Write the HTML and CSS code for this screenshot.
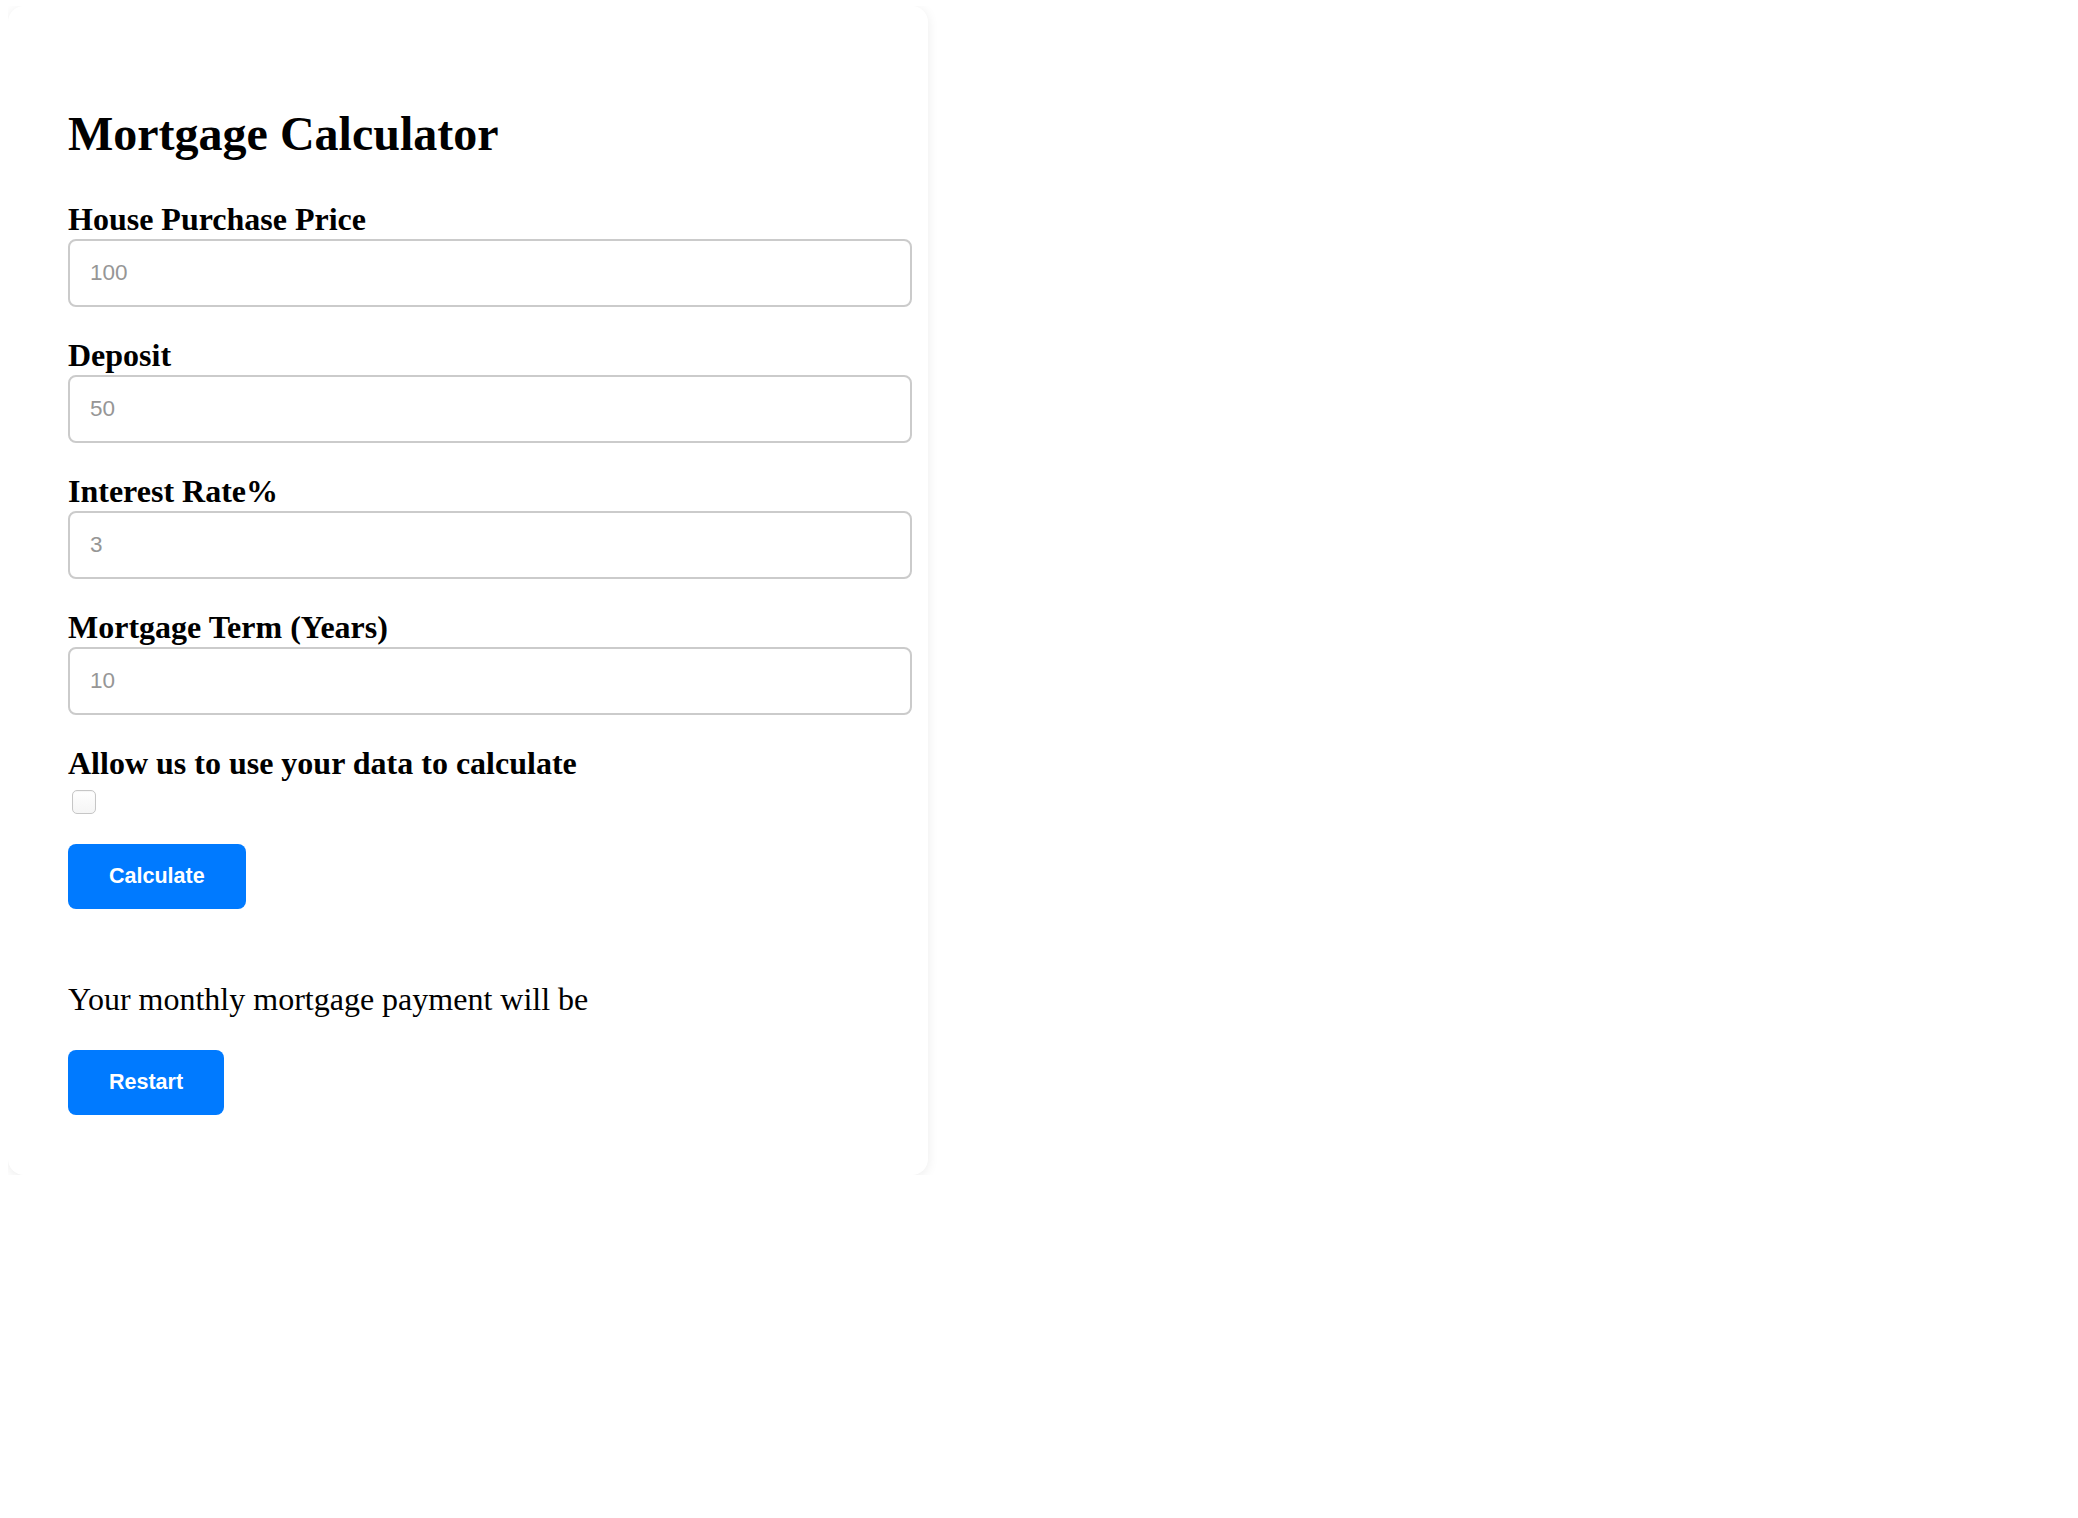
FILE: index.html
```html
<!DOCTYPE html>
<html lang="en">
<head>
<meta charset="utf-8">
<title>Mortgage Calculator</title>
<link rel="stylesheet" href="styles.css">
</head>
<body>
<div class="card">
  <h1 class="title">Mortgage Calculator</h1>
  <form class="form">
    <label class="label" for="price">House Purchase Price</label>
    <input class="field" id="price" type="text" placeholder="100">
    <label class="label" for="deposit">Deposit</label>
    <input class="field" id="deposit" type="text" placeholder="50">
    <label class="label" for="rate">Interest Rate%</label>
    <input class="field" id="rate" type="text" placeholder="3">
    <label class="label" for="term">Mortgage Term (Years)</label>
    <input class="field" id="term" type="text" placeholder="10">
    <label class="label" for="consent">Allow us to use your data to calculate</label>
    <input class="check" id="consent" type="checkbox">
    <button class="btn" type="button">Calculate</button>
  </form>
  <p class="result">Your monthly mortgage payment will be</p>
  <button class="btn" type="button">Restart</button>
</div>
</body>
</html>
```

FILE: styles.css
```css
html, body {
  background: #ffffff;
}
body {
  margin: 6px 8px;
  font-family: "Liberation Serif", "Times New Roman", serif;
  color: #000;
}
.card {
  width: 920px;
  box-sizing: border-box;
  padding: 100px 16px 60px 60px;
  background: #fff;
  border-radius: 16px;
  box-shadow: 0 2px 12px rgba(0, 0, 0, 0.08);
}
.title {
  margin: 0 0 39px 0;
  font-size: 48px;
  line-height: 56px;
  font-weight: bold;
}
.form {
  display: flex;
  flex-direction: column;
  align-items: flex-start;
  margin: 0;
}
.label {
  display: block;
  font-size: 32px;
  line-height: 36px;
  font-weight: bold;
}
.field {
  display: block;
  width: 100%;
  height: 68px;
  box-sizing: border-box;
  margin: 2px 0 30px 0;
  padding: 0 20px;
  border: 2px solid #cbcbcb;
  border-radius: 8px;
  font-family: "Liberation Sans", Arial, sans-serif;
  font-size: 22.5px;
  color: #333;
  background: #fff;
  outline: none;
}
.field::placeholder {
  color: #969696;
}
.check {
  -webkit-appearance: none;
  appearance: none;
  display: block;
  width: 24px;
  height: 24px;
  box-sizing: border-box;
  margin: 9px 0 30px 4px;
  border: 1px solid #c6c6c6;
  border-radius: 5px;
  background: linear-gradient(#ffffff, #f5f5f5);
  box-shadow: inset 0 1px 1px rgba(0, 0, 0, 0.04);
}
.btn {
  display: block;
  height: 65px;
  padding: 0 41px;
  border: none;
  border-radius: 8px;
  background: #007aff;
  color: #fff;
  font-family: "Liberation Sans", Arial, sans-serif;
  font-size: 21.5px;
  font-weight: bold;
  cursor: pointer;
}
.result {
  margin: 72px 0 33px 0;
  font-size: 32px;
  line-height: 36px;
}
```
